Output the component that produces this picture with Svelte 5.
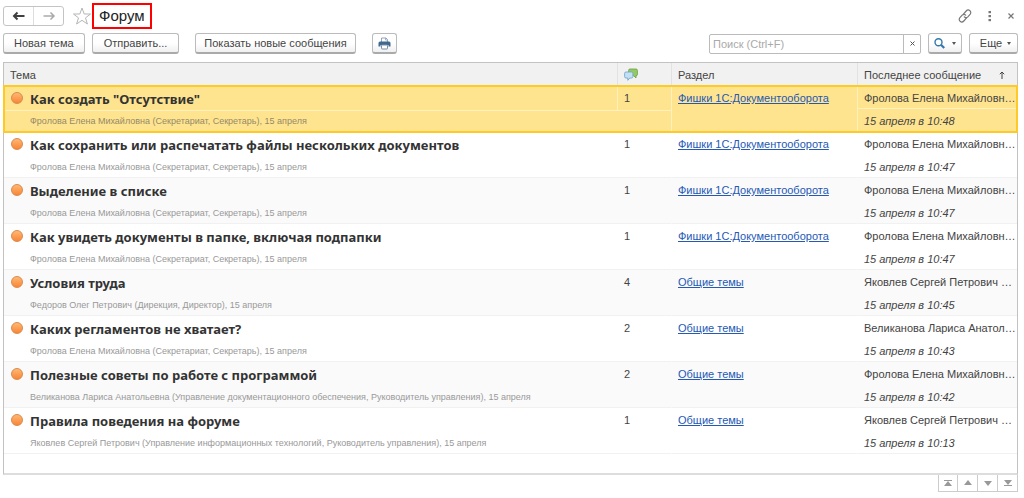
<script>
  const posts = [
    { title: 'Как создать "Отсутствие"', author: 'Фролова Елена Михайловна (Секретариат, Секретарь), 15 апреля', count: 1, section: 'Фишки 1С:Документооборота', last: 'Фролова Елена Михайловн…', time: '15 апреля в 10:48' },
    { title: 'Как сохранить или распечатать файлы нескольких документов', author: 'Фролова Елена Михайловна (Секретариат, Секретарь), 15 апреля', count: 1, section: 'Фишки 1С:Документооборота', last: 'Фролова Елена Михайловн…', time: '15 апреля в 10:47' },
    { title: 'Выделение в списке', author: 'Фролова Елена Михайловна (Секретариат, Секретарь), 15 апреля', count: 1, section: 'Фишки 1С:Документооборота', last: 'Фролова Елена Михайловн…', time: '15 апреля в 10:47' },
    { title: 'Как увидеть документы в папке, включая подпапки', author: 'Фролова Елена Михайловна (Секретариат, Секретарь), 15 апреля', count: 1, section: 'Фишки 1С:Документооборота', last: 'Фролова Елена Михайловн…', time: '15 апреля в 10:47' },
    { title: 'Условия труда', author: 'Федоров Олег Петрович (Дирекция, Директор), 15 апреля', count: 4, section: 'Общие темы', last: 'Яковлев Сергей Петрович …', time: '15 апреля в 10:45' },
    { title: 'Каких регламентов не хватает?', author: 'Фролова Елена Михайловна (Секретариат, Секретарь), 15 апреля', count: 2, section: 'Общие темы', last: 'Великанова Лариса Анатол…', time: '15 апреля в 10:43' },
    { title: 'Полезные советы по работе с программой', author: 'Великанова Лариса Анатольевна (Управление документационного обеспечения, Руководитель управления), 15 апреля', count: 2, section: 'Общие темы', last: 'Фролова Елена Михайловн…', time: '15 апреля в 10:42' },
    { title: 'Правила поведения на форуме', author: 'Яковлев Сергей Петрович (Управление информационных технологий, Руководитель управления), 15 апреля', count: 1, section: 'Общие темы', last: 'Яковлев Сергей Петрович …', time: '15 апреля в 10:13' }
  ];
  let selected = $state(0);
  let query = $state('');
</script>

<div class="page">
  <header class="top">
    <div class="history">
      <button type="button" aria-label="Назад">
        <svg width="14" height="10" viewBox="0 0 14 10"><path d="M2 5h10.500M5.500 1.500L2 5l3.500 3.500" fill="none" stroke="#404040" stroke-width="2" /></svg>
      </button>
      <button type="button" aria-label="Вперед">
        <svg width="14" height="10" viewBox="0 0 14 10"><path d="M1.500 5H12M8.500 1.500L12 5 8.500 8.500" fill="none" stroke="#aaa" stroke-width="1.500" /></svg>
      </button>
    </div>
    <button class="plain star" type="button" aria-label="В избранное">
      <svg width="20" height="18" viewBox="0 0 20 18"><path d="M10 1l2.200 6h6.300l-5 3.900 1.900 6.100L10 13.300 4.600 17l1.900-6.100-5-3.900h6.300z" fill="#fff" stroke="#b5b5b5" stroke-width="1" /></svg>
    </button>
    <h1>Форум</h1>
    <div class="window">
      <button class="plain" type="button" aria-label="Ссылка">
        <svg width="14" height="14" viewBox="0 0 14 14" fill="none" stroke="#777" stroke-width="1.200" stroke-linecap="round"><path d="M5.200 5.400L8.200 2c1-1.100 2.600-1.200 3.700-.3s1.200 2.500.2 3.600L9.800 7.800c-1 1-2.600 1-3.500.1M8.800 8.600L5.800 12c-1 1.100-2.600 1.200-3.700.3S.9 9.800 1.900 8.700l2.300-2.500c1-1 2.600-1 3.500-.1" /></svg>
      </button>
      <button class="plain" type="button" aria-label="Меню">
        <svg width="4" height="12" viewBox="0 0 4 12" fill="#777"><rect x="0.500" y="1" width="2.500" height="2.200" /><rect x="0.500" y="5" width="2.500" height="2.200" /><rect x="0.500" y="9" width="2.500" height="2.200" /></svg>
      </button>
      <button class="plain" type="button" aria-label="Закрыть">
        <svg width="6" height="6" viewBox="0 0 6 6"><path d="M.5.5l5 5M5.500.5l-5 5" stroke="#777" stroke-width="1.200" /></svg>
      </button>
    </div>
  </header>

  <div class="toolbar">
    <button class="btn" type="button">Новая тема</button>
    <button class="btn wide" type="button">Отправить...</button>
    <button class="btn gap" type="button">Показать новые сообщения</button>
    <button class="btn gap icon" type="button" aria-label="Печать">
      <svg width="13" height="13" viewBox="0 0 13 13"><path d="M3.500 5V1h4.500l1.500 1.500V5" fill="#fff" stroke="#8fa5bb" /><path d="M7.500 1v2h2" fill="none" stroke="#8fa5bb" stroke-width=".8" /><path d="M2 4.500h9q1.500 0 1.500 1.500v3.500h-2V8h-8v1.500h-2V6q0-1.500 1.500-1.500z" fill="#41688f" /><rect x="3.500" y="8" width="6" height="4" rx=".5" fill="#fff" stroke="#7590ab" /></svg>
    </button>
    <div class="find">
      <input type="text" aria-label="Поиск" placeholder="Поиск (Ctrl+F)" bind:value={query} />
      <button type="button" aria-label="Очистить" onclick={() => (query = '')}>
        <svg width="5" height="5" viewBox="0 0 5 5"><path d="M.5.500l4 4M4.500.5l-4 4" stroke="#555" /></svg>
      </button>
    </div>
    <button class="btn drop" type="button" aria-label="Найти">
      <svg width="11" height="11" viewBox="0 0 11 11" fill="none" stroke="#3278ad"><circle cx="4.500" cy="4.200" r="3.500" stroke-width="1.400" /><path d="M7 6.800l3.200 3.200" stroke-width="2.200" /></svg>
      <i class="caret"></i>
    </button>
    <button class="btn drop more" type="button">Еще <i class="caret"></i></button>
  </div>

  <div class="list">
    <table>
      <colgroup><col /><col class="c-count" /><col class="c-section" /><col class="c-last" /></colgroup>
      <thead>
        <tr>
          <th>Тема</th>
          <th aria-label="Сообщения">
            <svg width="14" height="13" viewBox="0 0 14 13"><path d="M6 1h6q1.400 0 1.400 1.400v4Q13.400 7.800 12 7.800v2.200L9.800 7.800H6Q4.600 7.800 4.600 6.400v-4Q4.600 1 6 1z" fill="#93cb63" stroke="#699f45" stroke-width=".8" /><path d="M2 4h5.500q1.400 0 1.400 1.400v3.200Q8.900 10 7.500 10H5.800l-2 2.300V10H2Q.6 10 .6 8.600V5.400Q.6 4 2 4z" fill="#c2e0f5" stroke="#6e9fc5" stroke-width=".8" /></svg>
          </th>
          <th>Раздел</th>
          <th><div class="sorted">Последнее сообщение
            <svg width="6" height="8" viewBox="0 0 6 8"><path d="M3 8V1M.8 3.200L3 1l2.200 2.200" fill="none" stroke="#444" /></svg></div></th>
        </tr>
      </thead>
      {#each posts as post, i}
        <tbody class:selected={selected === i} onclick={() => (selected = i)}>
          <tr class="first">
            <td class="topic"><div class="title"><span class="dot"></span>{post.title}</div></td>
            <td class="count">{post.count}</td>
            <td class="section" rowspan="2"><a href="#section">{post.section}</a></td>
            <td class="last" rowspan="2">
              <div class="person">{post.last}</div>
              <div class="time">{post.time}</div>
            </td>
          </tr>
          <tr class="second"><td class="author" colspan="2">{post.author}</td></tr>
        </tbody>
      {/each}
    </table>
  </div>

  <nav class="pager" aria-label="Прокрутка списка">
    <button type="button" aria-label="В начало"><svg width="8" height="6" viewBox="0 0 8 6" fill="#999"><path d="M0 0h8v1H0zM4 1l4 5H0z" /></svg></button>
    <button type="button" aria-label="Вверх"><svg width="8" height="6" viewBox="0 0 8 6" fill="#999"><path d="M4 0l4 5H0z" /></svg></button>
    <button type="button" aria-label="Вниз"><svg width="8" height="6" viewBox="0 0 8 6" fill="#999"><path d="M0 1h8L4 6z" /></svg></button>
    <button type="button" aria-label="В конец"><svg width="8" height="6" viewBox="0 0 8 6" fill="#999"><path d="M0 0h8L4 5zM0 5h8v1H0z" /></svg></button>
  </nav>
</div>

<style>
  :global(body) { margin: 0; background: #fff; }
  .page { padding: 6px 6px 6px 3px; font: 11px/16px "Liberation Sans", Arial, sans-serif; color: #444; }
  button, input { box-sizing: border-box; margin: 0; padding: 0; font: inherit; color: inherit; }
  button { display: flex; align-items: center; justify-content: center; }
  svg { display: block; }
  .top { display: flex; align-items: center; height: 20px; }
  .history { display: flex; box-sizing: border-box; width: 61px; height: 20px; border: 1px solid #c4c4c4; border-radius: 3px; }
  .history button { flex: 1; border: 0; background: none; }
  .history button + button { border-left: 1px solid #ddd; }
  .plain { border: 0; background: none; }
  .star { margin-left: 8px; }
  h1 { margin: 0; box-sizing: border-box; height: 26px; padding: 0 5px; border: 2px solid #f00; font-size: 15px; line-height: 22px; font-weight: 400; color: #222; }
  .window { display: flex; align-items: center; gap: 16px; margin: 0 4px 0 auto; }
  .toolbar { display: flex; align-items: center; height: 21px; margin-top: 7px; gap: 7px; }
  .btn { height: 21px; padding: 0 10px; border: 1px solid #bbb; border-bottom: 2px solid #aaa; border-radius: 3px; background: linear-gradient(#fff 50%, #f0f0f0); white-space: nowrap; }
  .wide { padding: 0 11px; }
  .gap { margin-left: 9px; padding: 0 8px; }
  .icon { width: 25px; padding: 0; }
  .find { display: flex; box-sizing: border-box; width: 212px; height: 20px; margin-left: auto; border: 1px solid #bbb; border-radius: 2px; }
  .find input { flex: 1; min-width: 0; border: 0; padding: 0 3px; outline: 0; background: none; }
  .find input::placeholder { color: #aaa; opacity: 1; }
  .find button { width: 17px; border: 0; border-left: 1px solid #bbb; background: none; }
  .drop { width: 34px; padding: 0; gap: 7px; }
  .more { width: 49px; padding-left: 4px; gap: 5px; }
  .caret { border: 2px solid transparent; border-top: 3px solid #555; border-bottom: 0; }
  .list { margin-top: 8px; border: 1px solid #c2c2c2; border-bottom: 2px solid #ddd; padding-bottom: 19px; }
  table { width: 100%; table-layout: fixed; border-collapse: separate; border-spacing: 0; }
  .c-count { width: 54px; }
  .c-section { width: 186px; }
  .c-last { width: 160px; }
  th { height: 23px; padding: 0 6px; background: #f1f1f1; text-align: left; font-weight: 400; }
  th + th { border-left: 1px solid #e2e2e2; }
  .sorted { display: flex; align-items: center; justify-content: space-between; padding-right: 6px; white-space: nowrap; }
  td { padding: 0 6px; vertical-align: top; white-space: nowrap; }
  .first { height: 25px; }
  .second { height: 21px; }
  tbody:nth-of-type(odd) { background: #fafafa; }
  .author, .section, .last { border-bottom: 1px solid #f1f1f1; }
  td + td { border-left: 1px solid transparent; }
  .title { display: flex; align-items: center; gap: 7px; height: 22px; padding: 2px 0 0 1px; font: bold 13px/22px "Noto Sans", "Open Sans", sans-serif; color: #333; }
  .dot { box-sizing: border-box; width: 12px; height: 12px; margin-bottom: 2px; border: 1px solid #d98a4a; border-radius: 50%; background: linear-gradient(#ffb873, #f98536); }
  .count, .section, .last { padding-top: 4px; }
  .author { padding-left: 26px; font-size: 9px; line-height: 20px; color: #999; }
  a { color: #2459b5; }
  .last { padding: 0; }
  .person { padding: 4px 0 2px 6px; border-bottom: 1px solid transparent; }
  .time { padding: 4px 0 0 6px; font-style: italic; }
  tbody.selected { background: #ffe48f; outline: 2px solid #fdca28; outline-offset: -1px; }
  .selected .count, .selected .section, .selected .last { border-left-color: #fff0bd; }
  .selected .topic, .selected .count, .selected .person { border-bottom: 1px solid #fff0bd; }
  .selected .author { color: #948a68; }
  .pager { display: flex; justify-content: flex-end; }
  .pager button { width: 20px; height: 17px; border: 1px solid #ccc; border-top: 0; background: #fff; }
  .pager button + button { border-left: 0; }
</style>
